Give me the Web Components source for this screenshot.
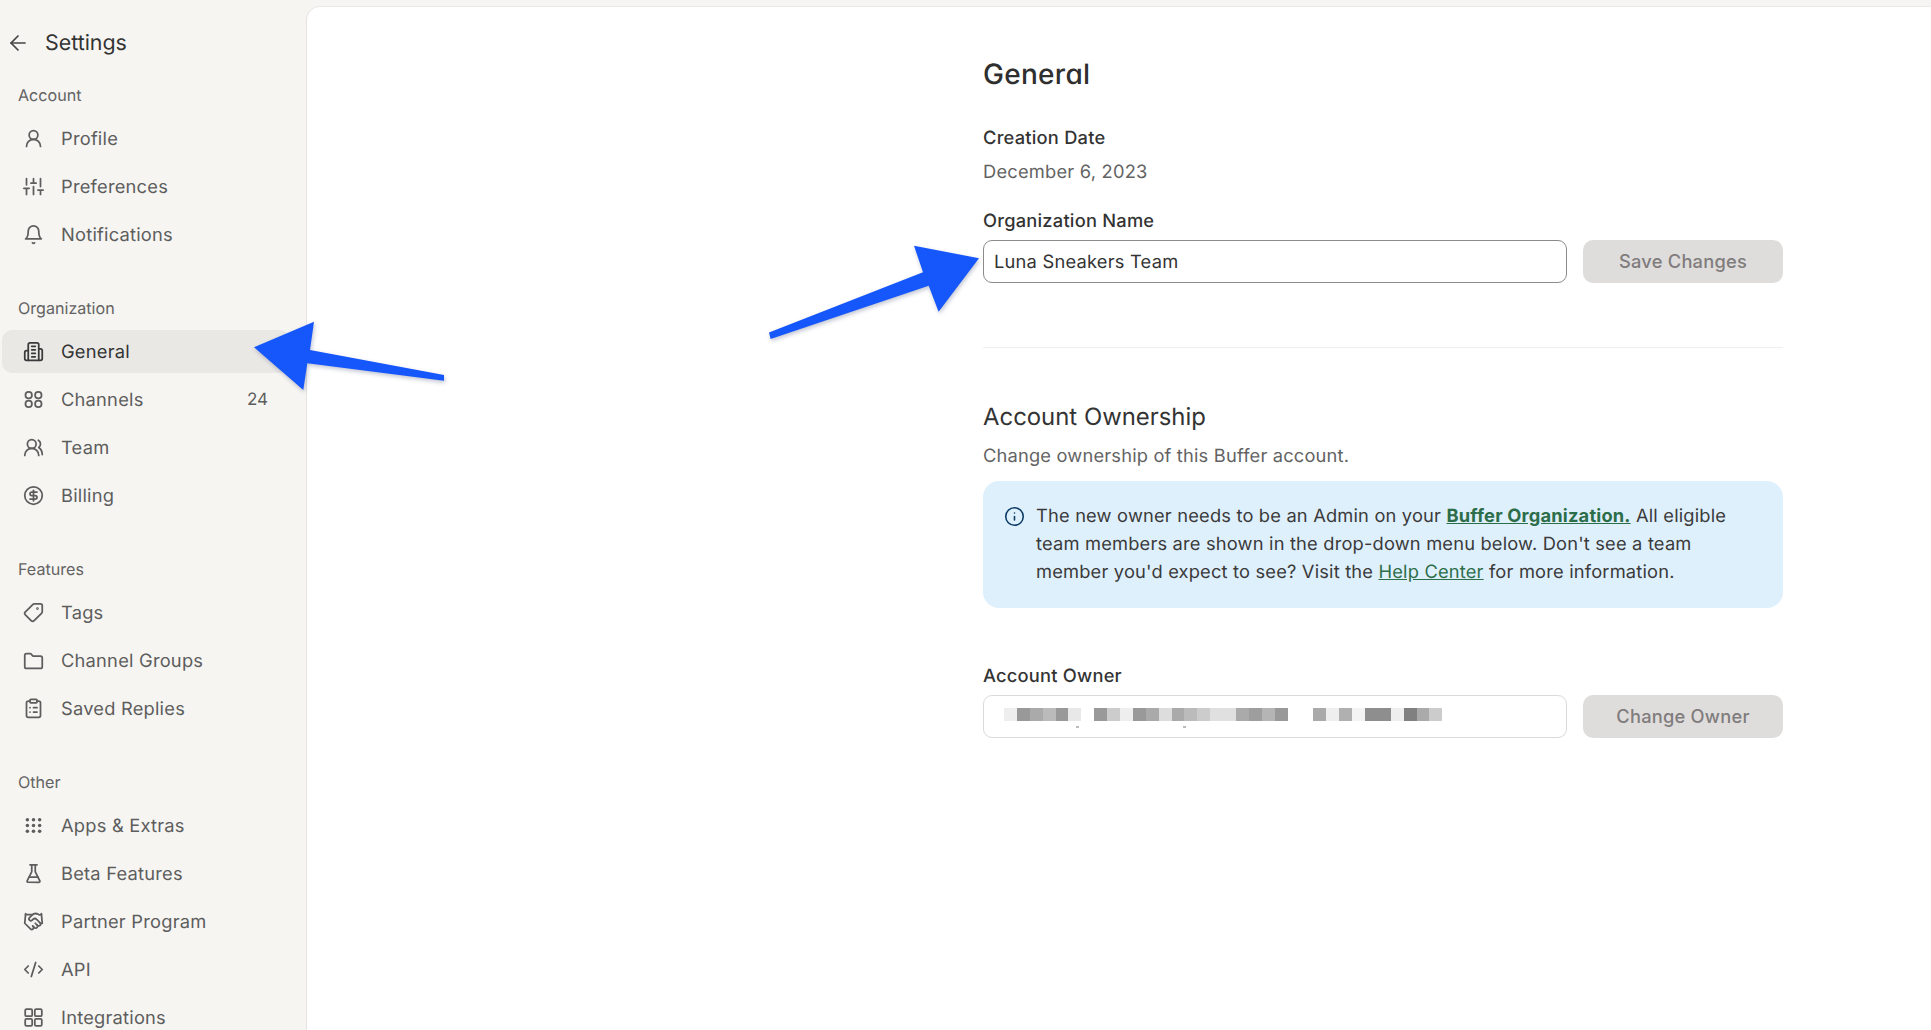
<!DOCTYPE html>
<html lang="en">
<head>
<meta charset="utf-8">
<title>Settings</title>
<style>
html,body{margin:0;height:100%;overflow:hidden;background:#f6f5f2;font-family:Inter,"Liberation Sans",sans-serif;color:#2f2f2f;text-rendering:geometricPrecision}
settings-page{height:100vh}
</style>
</head>
<body>
<settings-page>
  <settings-sidebar slot="side">
    <nav-section label="Account" first>
      <nav-item icon="user">Profile</nav-item>
      <nav-item icon="sliders">Preferences</nav-item>
      <nav-item icon="bell">Notifications</nav-item>
    </nav-section>
    <nav-section label="Organization">
      <nav-item icon="building" active>General</nav-item>
      <nav-item icon="circles" count="24">Channels</nav-item>
      <nav-item icon="users">Team</nav-item>
      <nav-item icon="dollar">Billing</nav-item>
    </nav-section>
    <nav-section label="Features">
      <nav-item icon="tag">Tags</nav-item>
      <nav-item icon="folder">Channel Groups</nav-item>
      <nav-item icon="clipboard">Saved Replies</nav-item>
    </nav-section>
    <nav-section label="Other">
      <nav-item icon="grip">Apps &amp; Extras</nav-item>
      <nav-item icon="flask">Beta Features</nav-item>
      <nav-item icon="handshake">Partner Program</nav-item>
      <nav-item icon="code">API</nav-item>
      <nav-item icon="grid">Integrations</nav-item>
    </nav-section>
  </settings-sidebar>
  <settings-panel slot="main">
    <h-title>General</h-title>
    <form-text label="Creation Date">December 6, 2023</form-text>
    <form-row label="Organization Name" button="Save Changes" strong>Luna Sneakers Team</form-row>
    <section-rule></section-rule>
    <section-head sub="Change ownership of this Buffer account.">Account Ownership</section-head>
    <info-banner><span>The new owner needs to be an Admin on your <a href="#" class="b">Buffer Organization.</a> All eligible</span><span>team members are shown in the drop-down menu below. Don't see a team</span><span>member you'd expect to see? Visit the <a href="#">Help Center</a> for more information.</span></info-banner>
    <form-row label="Account Owner" button="Change Owner" owner><pixel-block></pixel-block></form-row>
  </settings-panel>
</settings-page>
<arrow-overlay></arrow-overlay>
<script>
const TXT='font-size:18.3px;letter-spacing:.22px;';
const ICONS={
 back:'<path d="M19 12H5"/><path d="m12 19-7-7 7-7"/>',
 user:'<circle cx="12" cy="8" r="5"/><path d="M20 21a8 8 0 0 0-16 0"/>',
 sliders:'<path d="M4 21v-7M4 10V3M12 21v-9M12 8V3M20 21v-5M20 12V3M1 14h6M9 8h6M17 16h6"/>',
 bell:'<path d="M6 8a6 6 0 0 1 12 0c0 7 3 9 3 9H3s3-2 3-9"/><path d="M10.8 21.5a1.5 1.5 0 0 0 2.4 0"/>',
 building:'<path d="M6 22V4a2 2 0 0 1 2-2h8a2 2 0 0 1 2 2v18Z"/><path d="M6 11H4a2 2 0 0 0-2 2v7a2 2 0 0 0 2 2h2"/><path d="M18 9h2a2 2 0 0 1 2 2v9a2 2 0 0 1-2 2h-2"/><path d="M10 6h4M10 10h4M10 14h4M10 18h4"/>',
 circles:'<circle cx="6.5" cy="7" r="3.7"/><circle cx="17.5" cy="7" r="3.7"/><circle cx="6.5" cy="17" r="3.7"/><circle cx="17.5" cy="17" r="3.7"/>',
 users:'<path d="M18 21a8 8 0 0 0-16 0"/><circle cx="10" cy="8" r="5"/><path d="M22 20c0-3.37-2-6.5-4-8a5 5 0 0 0-.45-8.3"/>',
 dollar:'<circle cx="12" cy="12" r="10"/><path d="M16 8h-6a2 2 0 1 0 0 4h4a2 2 0 1 1 0 4H8"/><path d="M12 18V6"/>',
 tag:'<g transform="matrix(-1 0 0 1 24 0)"><path d="M12.586 2.586A2 2 0 0 0 11.172 2H4a2 2 0 0 0-2 2v7.172a2 2 0 0 0 .586 1.414l8.704 8.704a2.426 2.426 0 0 0 3.42 0l6.58-6.58a2.426 2.426 0 0 0 0-3.42z"/><circle cx="7.5" cy="7.5" r=".5"/></g>',
 folder:'<path d="M20 21a2 2 0 0 0 2-2V9a2 2 0 0 0-2-2h-7.9a2 2 0 0 1-1.69-.9L9.6 4.9A2 2 0 0 0 7.93 4H4a2 2 0 0 0-2 2v13a2 2 0 0 0 2 2Z"/>',
 clipboard:'<rect x="8" y="1.5" width="8" height="4" rx="1"/><path d="M16 3.5h2a2 2 0 0 1 2 2V20a2 2 0 0 1-2 2H6a2 2 0 0 1-2-2V5.5a2 2 0 0 1 2-2h2"/><path d="M12 11h4M12 16h4M8 11h.01M8 16h.01"/>',
 grip:'<g fill="currentColor" stroke="none"><circle cx="5" cy="5.5" r="2"/><circle cx="12" cy="5.5" r="2"/><circle cx="19" cy="5.5" r="2"/><circle cx="5" cy="12" r="2"/><circle cx="12" cy="12" r="2"/><circle cx="19" cy="12" r="2"/><circle cx="5" cy="18.5" r="2"/><circle cx="12" cy="18.5" r="2"/><circle cx="19" cy="18.5" r="2"/></g>',
 flask:'<path d="M10 2v7.527a2 2 0 0 1-.211.896L4.72 20.55a1 1 0 0 0 .9 1.45h12.76a1 1 0 0 0 .9-1.45l-5.069-10.127A2 2 0 0 1 14 9.527V2"/><path d="M8 2h8M7 16h10"/>',
 handshake:'<path d="m11 17 2 2a1 1 0 1 0 3-3"/><path d="m14 14 2.5 2.5a1 1 0 1 0 3-3l-3.88-3.88a3 3 0 0 0-4.24 0l-.88.88a1 1 0 1 1-3-3l2.81-2.81a5.79 5.79 0 0 1 7.06-.87l.47.28a2 2 0 0 0 1.42.25L21 4"/><path d="m21 3 1 11h-2"/><path d="M3 3 2 14l6.5 6.5a1 1 0 1 0 3-3"/><path d="M3 4h8"/>',
 code:'<path d="m18 16 4-4-4-4"/><path d="m6 8-4 4 4 4"/><path d="m14.5 4-5 16"/>',
 grid:'<rect x="2.5" y="2.5" width="8" height="8" rx="1.5"/><rect x="13.5" y="2.5" width="8" height="8" rx="1.5"/><rect x="2.5" y="13.5" width="8" height="8" rx="1.5"/><rect x="13.5" y="13.5" width="8" height="8" rx="1.5"/>',
 info:'<circle cx="12" cy="12" r="10"/><path d="M12 16v-4"/><path d="M12 8h.01"/>'
};
const svg=(n,s,w=2)=>`<svg width="${s}" height="${s}" viewBox="0 0 24 24" fill="none" stroke="currentColor" stroke-width="${w}" stroke-linecap="round" stroke-linejoin="round" aria-hidden="true">${ICONS[n]}</svg>`;
class Base extends HTMLElement{
  constructor(){super();this.attachShadow({mode:'open'});}
  connectedCallback(){this.shadowRoot.innerHTML=this.render();}
}
customElements.define('settings-page',class extends Base{render(){return `<style>
:host{display:flex;align-items:stretch;overflow:hidden}
.s{flex:0 0 306px;width:306px;display:block}
.m{flex:1 1 auto;min-width:0;display:flex;padding-top:6px}
</style><div class="s"><slot name="side"></slot></div><div class="m"><slot name="main"></slot></div>`}});
customElements.define('settings-sidebar',class extends Base{render(){return `<style>
:host{display:block;height:100vh;overflow:hidden;padding-top:19px;box-sizing:border-box}
.t{display:flex;align-items:center;height:48px;padding-left:6px;gap:3px;font-size:21.4px;color:#333}
.t svg{color:#444}
h1{font:inherit;margin:0}
</style><div class="t">${svg('back',24,1.7)}<span style="width:9px"></span><h1>Settings</h1></div><slot></slot>`}});
customElements.define('nav-section',class extends Base{render(){const f=this.hasAttribute('first');return `<style>
:host{display:block;padding-left:2px;width:288px;margin-top:${f?'18px':'42px'}}
.l{height:20px;line-height:20px;font-size:16.1px;color:#636363;padding-left:16px;margin-bottom:12px}
</style><div class="l">${this.getAttribute('label')}</div><slot></slot>`}});
customElements.define('nav-item',class extends Base{render(){const a=this.hasAttribute('active'),c=this.getAttribute('count');return `<style>
:host{display:flex;align-items:center;height:43px;margin-bottom:5px;border-radius:10px;padding-left:21px;box-sizing:border-box;${TXT}color:${a?'#333':'#5d5d5d'};background:${a?'#e9e8e5':'transparent'}}
.i{width:21px;height:21px;display:flex;flex:none;color:${a?'#3a3a3a':'#5d5d5d'}}
.t{margin-left:17px;flex:1}
.c{margin-right:22px;font-size:17px;letter-spacing:0}
</style><span class="i">${svg(this.getAttribute('icon'),21)}</span><span class="t"><slot></slot></span>${c?`<span class="c">${c}</span>`:''}`}});
customElements.define('settings-panel',class extends Base{render(){return `<style>
:host{display:block;flex:1;background:#fff;border-top:1px solid #ebe9e6;border-left:1px solid #e6e4e1;border-top-left-radius:14px;padding:52px 0 0 676px;box-sizing:border-box;min-height:100%}
.c{width:800px;display:flex;flex-direction:column}
</style><div class="c"><slot></slot></div>`}});
customElements.define('h-title',class extends Base{render(){return `<style>
:host{display:block;height:30px;line-height:30px;font-size:28px;letter-spacing:.3px;font-weight:500;color:#2f2f2f;font-feature-settings:"cv11" 1;margin-bottom:37px}
</style><slot></slot>`}});
customElements.define('form-text',class extends Base{render(){return `<style>
:host{display:block;${TXT}line-height:24px}
.l{font-weight:500;color:#333;margin-bottom:10px}
.v{color:#636363}
</style><div class="l">${this.getAttribute('label')}</div><div class="v"><slot></slot></div>`}});
customElements.define('form-row',class extends Base{render(){const s=this.hasAttribute('strong');return `<style>
:host{display:block;${TXT}margin-top:${s?'25px':'56px'}}
.l{font-weight:500;color:#333;line-height:24px;margin-bottom:7px}
.r{display:flex;gap:16px;height:43px}
.f{flex:1;box-sizing:border-box;border:1px solid ${s?'#8b8b8b':'#dadada'};border-radius:9px;padding:0 10px;display:flex;align-items:center;color:#333;background:#fff;position:relative;overflow:hidden}
button{flex:0 0 200px;border:0;border-radius:10px;background:#dfdcdc;color:#807c7c;font:inherit;letter-spacing:inherit;font-weight:500;padding:0 0 1px}
</style><div class="l">${this.getAttribute('label')}</div><div class="r"><div class="f"><slot></slot></div><button>${this.getAttribute('button')}</button></div>`}});
customElements.define('section-rule',class extends Base{render(){return `<style>
:host{display:block;height:1px;background:#f0efed;margin-top:64px}
</style>`}});
customElements.define('section-head',class extends Base{render(){return `<style>
:host{display:block;margin-top:54px}
.h{font-size:23.9px;line-height:30px;color:#333}
.s{${TXT}letter-spacing:.18px;line-height:24px;color:#636363;margin-top:12px}
</style><div class="h"><slot></slot></div><div class="s">${this.getAttribute('sub')}</div>`}});
customElements.define('info-banner',class extends Base{
 connectedCallback(){
  const tpl=this.innerHTML;
  this.shadowRoot.innerHTML=`<style>
:host{display:flex;margin-top:13px;background:#dff0fd;border-radius:16px;padding:21px 24px 22px 21px;${TXT}letter-spacing:.18px;line-height:28px;color:#3a3a3a}
.i{flex:none;width:21px;height:28px;display:flex;align-items:center;color:#0c3b66;margin-right:11px}
.x>span{display:block;white-space:nowrap}
a{color:#2c6e49;text-decoration:underline}
a.b{font-weight:700}
</style><span class="i">${svg('info',21,1.8)}</span><div class="x">${tpl}</div>`;
  this.textContent='';
 }
 render(){return ''}
});
customElements.define('pixel-block',class extends Base{render(){
 const cells=['#eee','#999','#aaa','#bbb','#999','#e8e8e8','#fff','#999','#ccc','#eee','#999','#aaa','#ddd','#aaa','#bbb','#ccc','#e0e0e0','#e0e0e0','#aaa','#9e9e9e','#b5b5b5','#999','#fff','#fff','#aaa','#eee','#b0b0b0','#f4f4f4','#8e8e8e','#8e8e8e','#eee','#808080','#aaa','#ccc'];
 return `<style>
:host{display:block;margin-left:10px;align-self:flex-start;margin-top:12px}
.r{display:flex;height:13px}
.r i{display:block;width:12.9px;height:13px}
.d{display:flex;gap:104px;padding-left:72px;margin-top:5px}
.d b{display:block;width:3px;height:1.5px;background:#bdbdbd}
</style><div class="r">${cells.map(c=>`<i style="background:${c}"></i>`).join('')}</div><div class="d"><b></b><b></b></div>`}});
customElements.define('arrow-overlay',class extends Base{render(){return `<style>
:host{position:absolute;left:0;top:0;width:1931px;height:1030px;pointer-events:none;display:block}
svg{display:block;filter:drop-shadow(1px 2px 2px rgba(30,40,90,.28))}
</style><svg width="1931" height="1030" viewBox="0 0 1931 1030" fill="#1557fb">
<polygon points="254,347.3 314,321.7 310,350 444,375 444,380.7 307.3,363.3 303.3,390"/>
<polygon points="979,258.3 914,245.7 923,272.3 769,332.5 770.6,339 928.7,285.7 938.6,311.7"/>
</svg>`}});
</script>
</body>
</html>
